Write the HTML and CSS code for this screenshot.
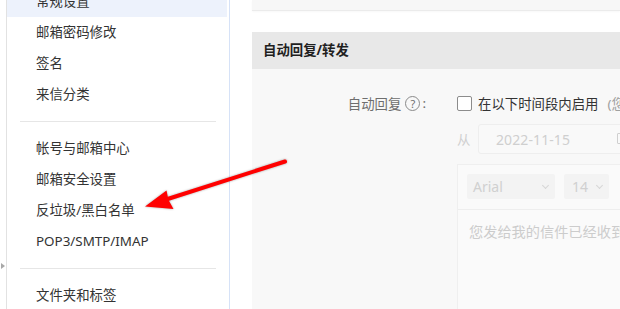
FILE: index.html
```html
<!DOCTYPE html>
<html lang="zh-CN">
<head>
<meta charset="utf-8">
<title>设置</title>
<link rel="stylesheet" href="styles.css">
</head>
<body>
<div class="page">
  <aside class="sidebar">
    <ul class="menu">
      <li class="item active">常规设置</li>
      <li class="item">邮箱密码修改</li>
      <li class="item">签名</li>
      <li class="item">来信分类</li>
      <li class="sep"></li>
      <li class="item">帐号与邮箱中心</li>
      <li class="item">邮箱安全设置</li>
      <li class="item">反垃圾/黑白名单</li>
      <li class="item">POP3/SMTP/IMAP</li>
      <li class="sep"></li>
      <li class="item">文件夹和标签</li>
    </ul>
  </aside>
  <span class="handle"></span>
  <main class="main">
    <div class="panel-top"></div>
    <section class="panel">
      <h2 class="panel-head">自动回复/转发</h2>
      <div class="panel-body">
        <div class="row row-first">
          <div class="label">自动回复<span class="help">?</span><span class="colon">:</span></div>
          <div class="ctrl">
            <span class="checkbox"></span>
            <span class="check-text">在以下时间段内启用</span>
            <span class="note">(您</span>
          </div>
        </div>
        <div class="row row-date">
          <div class="label"></div>
          <div class="ctrl">
            <span class="from">从</span>
            <div class="datebox"><span class="date">2022-11-15</span><span class="cal"></span></div>
          </div>
        </div>
        <div class="row row-editor">
          <div class="label"></div>
          <div class="editor">
            <div class="toolbar">
              <div class="select sel-font"><span>Arial</span><span class="chev"></span></div>
              <div class="select sel-size"><span>14</span><span class="chev"></span></div>
            </div>
            <div class="placeholder">您发给我的信件已经收到</div>
          </div>
        </div>
      </div>
    </section>
  </main>
  <svg class="arrow" width="620" height="309" viewBox="0 0 620 309">
    <line x1="285" y1="161.5" x2="163" y2="200.5" stroke="#ff0000" stroke-width="4" stroke-linecap="round"/>
    <polygon points="145,206.5 166.5,190.5 168.5,200 173.5,209" fill="#ff0000"/>
  </svg>
</div>
</body>
</html>
```

FILE: styles.css
```css
* { box-sizing: border-box; }
html, body { margin: 0; padding: 0; }
body {
  background: #ffffff;
  font-family: "Noto Sans", "Noto Sans CJK SC", sans-serif;
  font-size: 13.4px;
  color: #333333;
  overflow: hidden;
}
.page {
  position: relative;
  display: flex;
  width: 620px;
  height: 309px;
  overflow: hidden;
}
.sidebar {
  flex: 0 0 224px;
  margin-left: 6px;
  border-left: 1px solid #e2e2e2;
  border-right: 1px solid #d6e2f7;
  padding-right: 2px;
  height: 309px;
}
.menu {
  list-style: none;
  margin: -14px 0 0 0;
  padding: 0;
}
.item {
  height: 31px;
  line-height: 31px;
  padding-left: 29px;
  white-space: nowrap;
  color: #333;
}
.item.active { background: #edf2fc; }
.sep {
  height: 1px;
  background: #e6e6e6;
  margin: 11px 11px 11px 13px;
}
.handle {
  position: absolute;
  left: 1px;
  top: 263px;
  width: 0;
  height: 0;
  border-top: 3px solid transparent;
  border-bottom: 3px solid transparent;
  border-left: 4px solid #a8a8a8;
}
.main {
  flex: 1;
  padding-left: 22px;
  min-width: 0;
}
.panel-top {
  height: 11px;
  background: #f7f7f7;
  border-bottom: 1px solid #ebebeb;
  box-shadow: 0 1px 2px rgba(0,0,0,0.03);
  margin-bottom: 21px;
}
.panel { background: #f8f8f8; height: 300px; }
.panel-head {
  margin: 0;
  height: 37px;
  line-height: 37px;
  background: #e8e8e8;
  padding-left: 11px;
  font-size: 13.4px;
  font-weight: 700;
  color: #1f1f1f;
  white-space: nowrap;
}
.panel-body { padding-top: 25px; }
.row { display: flex; align-items: center; }
.label {
  flex: 0 0 176px;
  text-align: right;
  color: #6e6e6e;
  white-space: nowrap;
  display: flex;
  align-items: center;
  justify-content: flex-end;
}
.help {
  display: inline-flex;
  width: 15px;
  height: 15px;
  border: 1px solid #8a8a8a;
  border-radius: 50%;
  font-size: 11px;
  line-height: 1;
  align-items: center;
  justify-content: center;
  color: #6e6e6e;
  margin-left: 4px;
}
.colon { margin-left: 2px; margin-right: 2px; }
.ctrl {
  display: flex;
  align-items: center;
  margin-left: 29px;
  white-space: nowrap;
}
.row-first { height: 18px; }
.checkbox {
  width: 15px;
  height: 15px;
  border: 1px solid #8c8c8c;
  border-radius: 2px;
  background: #fff;
  margin-right: 6px;
  flex: none;
}
.check-text { color: #333; }
.note { color: #a0a0a0; margin-left: 9px; }
.row-date { margin-top: 12px; }
.from { color: #cfcfcf; width: 21px; }
.datebox {
  width: 160px;
  height: 30px;
  border: 1px solid #eeeeee;
  border-radius: 3px;
  background: #f9f9f9;
  display: flex;
  align-items: center;
  padding-left: 17px;
  position: relative;
}
.date { color: #cfcfcf; font-size: 14px; letter-spacing: 0.1px; }
.cal {
  position: absolute;
  left: 138px;
  top: 8px;
  width: 10px;
  height: 11px;
  border: 1.5px solid #cfcfcf;
  border-radius: 1px;
}
.row-editor { margin-top: 10px; align-items: flex-start; }
.editor {
  margin-left: 29px;
  width: 200px;
  height: 200px;
  border: 1px solid #efefef;
  background: #fafafa;
}
.toolbar {
  display: flex;
  gap: 9px;
  padding: 9px 9px;
  height: 45px;
  border-bottom: 1px solid #eeeeee;
}
.select {
  height: 25px;
  background: #f3f3f3;
  border-radius: 2px;
  display: flex;
  align-items: center;
  justify-content: space-between;
  padding: 0 7px 0 6px;
  color: #d0d0d0;
  font-size: 14px;
}
.sel-font { width: 88px; }
.sel-size { width: 45px; padding-left: 8px; }
.chev {
  width: 5px;
  height: 5px;
  border-right: 1px solid #d6d6d6;
  border-bottom: 1px solid #d6d6d6;
  transform: rotate(45deg);
  margin-top: -3px;
}
.placeholder {
  padding: 11px 0 0 11px;
  color: #cccccc;
  font-size: 14.2px;
  white-space: nowrap;
}
.arrow {
  position: absolute;
  left: 0;
  top: 0;
  pointer-events: none;
  filter: drop-shadow(0 0 1px rgba(0,0,0,0.35));
}
```
